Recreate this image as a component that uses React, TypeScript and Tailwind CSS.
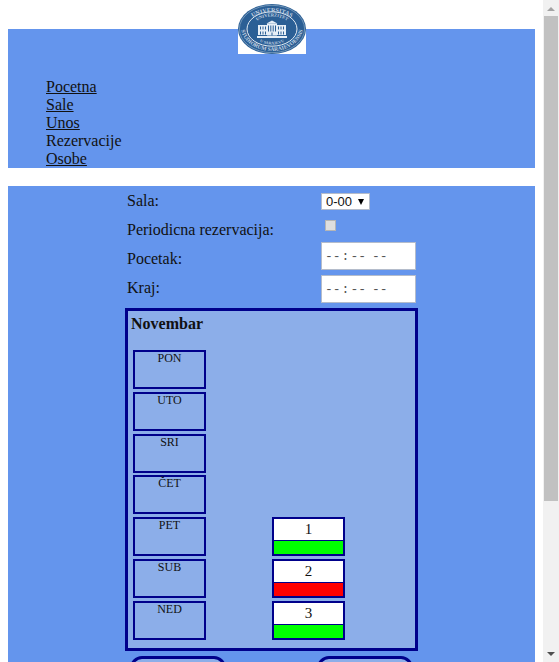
const days = ["PON", "UTO", "SRI", "ČET", "PET", "SUB", "NED"];

const dates: Record<string, { day: number; free: boolean }> = {
  PET: { day: 1, free: true },
  SUB: { day: 2, free: false },
  NED: { day: 3, free: true },
};

const links = ["Pocetna", "Sale", "Unos", "Rezervacije", "Osobe"];
const current = "Rezervacije";

function Logo() {
  return (
    <svg viewBox="0 0 68 50" className="h-[50px] w-[68px] bg-white" role="img" aria-label="Univerzitet u Sarajevu">
      <defs>
        <path id="outerTop" d="M6 27 A28 19 0 0 1 62 27" />
        <path id="outerBottom" d="M3 23 A31 24 0 0 0 65 23" />
        <path id="innerTop" d="M14 25 A20 12.500 0 0 1 54 25" />
        <path id="innerBottom" d="M13 25 A21 15.500 0 0 0 55 25" />
      </defs>
      <ellipse cx="34" cy="25" rx="34" ry="25" fill="#2b5f95" />
      <ellipse cx="34" cy="25" rx="32.600" ry="23.700" fill="none" stroke="#8daac6" strokeWidth="0.700" />
      <ellipse cx="34" cy="25" rx="25" ry="17.200" fill="none" stroke="#e3ebf3" strokeWidth="1" />
      <g fill="#c3d2e2" fontFamily="Liberation Serif, serif" fontWeight="bold" textAnchor="middle">
        <text fontSize="6">
          <textPath href="#outerTop" startOffset="50%">UNIVERSITAS</textPath>
        </text>
        <text fontSize="5.500">
          <textPath href="#outerBottom" startOffset="50%">STUDIORUM SARAIEVOENSIS</textPath>
        </text>
        <text fontSize="4.500">
          <textPath href="#innerTop" startOffset="50%">UNIVERZITET</textPath>
        </text>
        <text fontSize="4">
          <textPath href="#innerBottom" startOffset="50%">U SARAJEVU</textPath>
        </text>
      </g>
      <g fill="#e6eef6">
        <path d="M28.500 19.500 L34 16.500 L39.500 19.500 Z" />
        <rect x="20" y="21" width="28" height="10" />
        <rect x="29" y="19.500" width="10" height="12" />
        <rect x="19" y="32" width="30" height="2" />
      </g>
      <g stroke="#2b5f95" strokeWidth="1">
        <path d="M22.500 22.500 v3 M25 22.500 v3 M27.500 22.500 v3 M40.500 22.500 v3 M43 22.500 v3 M45.500 22.500 v3" />
        <path d="M22.500 27.500 v3 M25 27.500 v3 M27.500 27.500 v3 M40.500 27.500 v3 M43 27.500 v3 M45.500 27.500 v3" />
        <path d="M30.500 21.500 v6 M32.800 21.500 v6 M35.200 21.500 v6 M37.500 21.500 v6 M34 28.500 v3" />
      </g>
    </svg>
  );
}

function TimeInput({ id }: { id: string }) {
  return (
    <input
      id={id}
      type="time"
      className="h-7 w-[95px] border border-[#b4bccb] bg-white pt-0.5 pl-0.5 font-['Liberation_Mono',monospace] text-[13px] text-[#555] [&::-webkit-calendar-picker-indicator]:hidden"
    />
  );
}

function Scrollbar() {
  return (
    <div aria-hidden="true" className="flex w-4 shrink-0 flex-col items-center justify-between bg-[#f1f1f1]">
      <div className="flex w-full flex-1 flex-col items-center">
        <svg viewBox="0 0 16 16" className="size-4 shrink-0">
          <path d="M4 11 L8 7 L12 11 Z" fill="#a3a3a3" />
        </svg>
        <div className="h-3/4 w-[14px] bg-[#c1c1c1]" />
      </div>
      <svg viewBox="0 0 16 16" className="size-4 shrink-0">
        <path d="M4 6 L8 10 L12 6 Z" fill="#505050" />
      </svg>
    </div>
  );
}

export default function App() {
  return (
    <div className="flex h-screen overflow-hidden bg-white font-['Liberation_Serif',serif] text-base text-[#111]">
      <div className="min-w-0 flex-1 overflow-hidden px-2 pt-[29px]">
        <header className="flow-root bg-[#6495ed]">
          <div className="-mt-[25px] flex justify-center">
            <Logo />
          </div>
          <nav className="pt-6 pl-[38px]">
            <ul className="leading-[18px]">
              {links.map((label) => (
                <li key={label}>
                  {label === current ? (
                    label
                  ) : (
                    <a href="#" className="underline">
                      {label}
                    </a>
                  )}
                </li>
              ))}
            </ul>
          </nav>
        </header>

        <main className="mt-[18px] bg-[#6495ed] pb-10">
          <div className="mx-auto w-[293px]">
            <form className="flex">
              <div className="flex w-[196px] flex-col pl-0.5 leading-[29px]">
                <label htmlFor="sala">Sala:</label>
                <label htmlFor="periodicna">Periodicna rezervacija:</label>
                <label htmlFor="pocetak">Pocetak:</label>
                <label htmlFor="kraj">Kraj:</label>
              </div>
              <div className="flex flex-col items-start pt-[7px] pb-[5px]">
                <div className="relative">
                  <select
                    id="sala"
                    className="block h-[17px] w-[49px] appearance-none border border-[#b4bccb] bg-white pl-1 font-['Liberation_Sans',sans-serif] text-[13px] leading-[15px]"
                  >
                    <option>0-00</option>
                  </select>
                  <svg viewBox="0 0 6 6" className="pointer-events-none absolute top-1.5 right-1.5 size-1.5">
                    <path d="M0 0 H6 L3 6 Z" fill="#000" />
                  </svg>
                </div>
                <input
                  id="periodicna"
                  type="checkbox"
                  className="mt-2.5 ml-1 block size-[11px] appearance-none border border-[#b5b5b5] bg-[#dedede]"
                />
                <div className="mt-[11px] flex flex-col gap-[5px]">
                  <TimeInput id="pocetak" />
                  <TimeInput id="kraj" />
                </div>
              </div>
            </form>

            <section className="border-3 border-[#00008b] bg-[#8caee9] pr-1.5 pb-2 pl-[5px]">
              <h2 className="-ml-0.5 pt-[3px] leading-5 font-bold">Novembar</h2>
              <div className="mt-4 flex h-[290px] flex-col justify-between">
                {days.map((name) => {
                  const date = dates[name];
                  return (
                    <div key={name} className="flex h-[39px] justify-between pr-16">
                      <div className="w-[73px] border-2 border-[#00008b] text-center text-xs leading-[13px]">{name}</div>
                      {date && (
                        <div className="flex w-[73px] flex-col border-2 border-[#00008b] bg-white text-center text-[15px]">
                          <div className="flex-1 leading-[21px]">{date.day}</div>
                          <div className={`h-3.5 border-t border-[#00008b] ${date.free ? "bg-[#00ff00]" : "bg-[#ff0000]"}`} />
                        </div>
                      )}
                    </div>
                  );
                })}
              </div>
            </section>

            <div className="mt-[5px] flex justify-between px-[5px]">
              <button
                type="button"
                aria-label="Prethodni"
                className="h-10 w-24 rounded-xl border-3 border-[#00008b] bg-[#8caee9]"
              />
              <button
                type="button"
                aria-label="Sljedeći"
                className="h-10 w-24 rounded-xl border-3 border-[#00008b] bg-[#8caee9]"
              />
            </div>
          </div>
        </main>
      </div>
      <Scrollbar />
    </div>
  );
}
